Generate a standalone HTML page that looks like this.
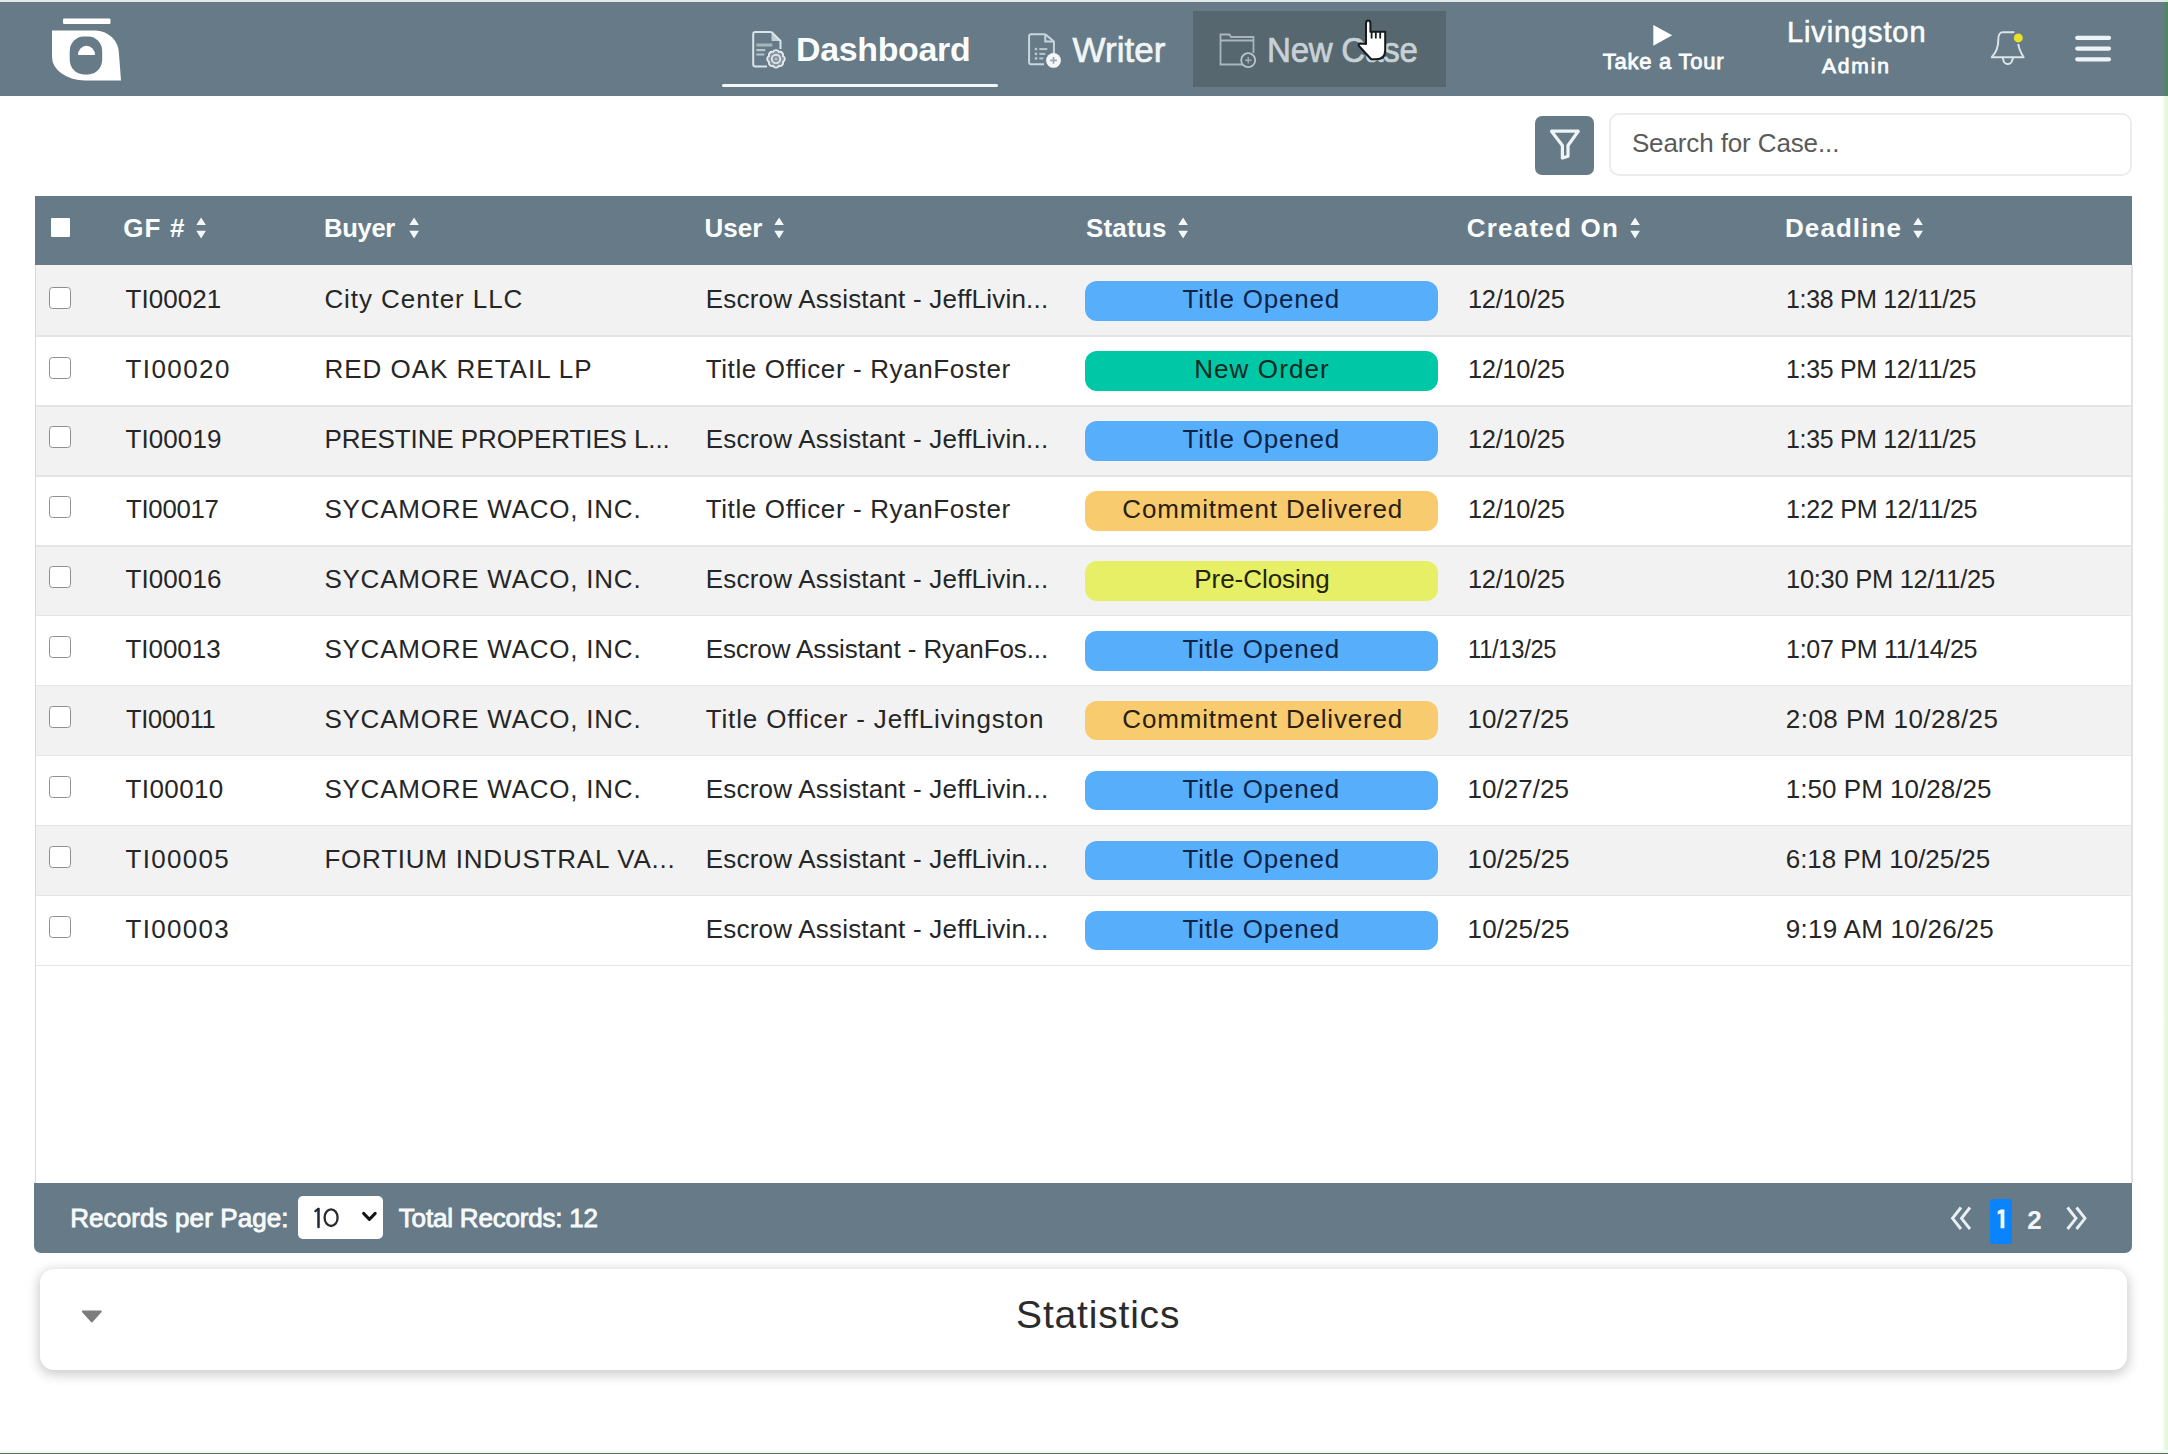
<!DOCTYPE html>
<html><head><meta charset="utf-8"><title>Dashboard</title>
<style>
html,body{margin:0;padding:0;width:2168px;height:1454px;overflow:hidden;background:#fff;}
body{position:relative;font-family:"Liberation Sans",sans-serif;}
.abs{position:absolute;}
.t{position:absolute;line-height:1;white-space:nowrap;}
</style></head><body>
<div class="abs" style="left:0;top:0;width:2168px;height:96px;background:#667b87"></div>
<div class="abs" style="left:0;top:0;width:2168px;height:1.6px;background:#e2e9eb"></div>
<svg class="abs" style="left:0;top:0" width="140" height="96" viewBox="0 0 140 96">
<rect x="63" y="18.5" width="47.5" height="5.5" rx="1.2" fill="#fff"/>
<path d="M52,30.4 H95 A24,23.5 0 0 1 119,54 L121,80.5 H85 A33,23.5 0 0 1 52,57 Z" fill="#fff"/>
<rect x="69.7" y="36.4" width="32.5" height="38" rx="14" ry="15" fill="#667b87"/>
<path d="M78,55 A8.5,9.3 0 0 1 95,55 Z" fill="#fff"/>
</svg>
<div class="abs" style="left:722px;top:83.5px;width:276px;height:3.5px;background:#f4f7f8;border-radius:2px"></div>
<div class="abs" style="left:1192.5px;top:11px;width:253px;height:75.5px;background:#56676f"></div>
<svg class="abs" style="left:740px;top:20px" width="60" height="60" viewBox="740 20 60 60">
<path d="M771.5,32 H755.5 Q753.2,32 753.2,34.3 V64.3 Q753.2,66.6 755.5,66.6 H767" fill="none" stroke="#d9e4ea" stroke-width="2"/>
<path d="M771.5,32 L780.5,41 V49" fill="none" stroke="#d9e4ea" stroke-width="2"/>
<path d="M771.5,32 V41 H780.5 Z" fill="#d9e4ea" opacity="0.8"/>
<rect x="756.3" y="43.5" width="16" height="3" fill="#a7b5bd"/>
<rect x="756.3" y="49" width="9" height="2.2" fill="#b7c3ca"/>
<rect x="756.3" y="53.5" width="8" height="2" fill="#b7c3ca"/>
<path d="M783.02,61.81 A3.3,3.3 0 0 1 778.91,65.92 A3.3,3.3 0 0 1 773.09,65.92 A3.3,3.3 0 0 1 768.98,61.81 A3.3,3.3 0 0 1 768.98,55.99 A3.3,3.3 0 0 1 773.09,51.88 A3.3,3.3 0 0 1 778.91,51.88 A3.3,3.3 0 0 1 783.02,55.99 A3.3,3.3 0 0 1 783.02,61.81 Z" fill="#8796a0" stroke="#e3ebef" stroke-width="1.9"/>
<circle cx="776" cy="58.9" r="4.2" fill="none" stroke="#dce5ea" stroke-width="1.9"/>
<circle cx="776" cy="58.9" r="1" fill="#c9d3d9"/>
</svg>
<svg class="abs" style="left:1020px;top:25px" width="50" height="50" viewBox="1020 25 50 50">
<path d="M1045.3,34.3 H1031 Q1029.1,34.3 1029.1,36.2 V62.3 Q1029.1,64.2 1031,64.2 H1044" fill="none" stroke="#c9d5dc" stroke-width="2"/>
<path d="M1045.3,34.3 L1053.9,41.5 V53" fill="none" stroke="#c9d5dc" stroke-width="2"/>
<path d="M1045.3,34.3 V41.5 H1053.9" fill="none" stroke="#c9d5dc" stroke-width="2"/>
<circle cx="1036" cy="49.1" r="1.4" fill="#b9c6cd"/><rect x="1039.3" y="48.1" width="8" height="2" fill="#b9c6cd"/>
<circle cx="1036" cy="53.9" r="1.4" fill="#b9c6cd"/><rect x="1039.3" y="52.9" width="6" height="2" fill="#b9c6cd"/>
<circle cx="1036" cy="58.4" r="1.4" fill="#b9c6cd"/><rect x="1039.3" y="57.4" width="4" height="2" fill="#b9c6cd"/>
<circle cx="1053.5" cy="60.4" r="7.4" fill="#f4f8fa"/>
<path d="M1053.5,57 V63.8 M1050.1,60.4 H1056.9" stroke="#9aa6ad" stroke-width="1.6"/>
</svg>
<svg class="abs" style="left:1210px;top:25px" width="55" height="50" viewBox="1210 25 55 50">
<path d="M1248,64.5 H1220.5 V34.5 H1229.5 L1231,37 H1253.5 V53" fill="none" stroke="#a9b6bd" stroke-width="1.8"/>
<path d="M1220.5,40.5 H1253.5" stroke="#a9b6bd" stroke-width="1.8"/>
<circle cx="1248.2" cy="60.2" r="7" fill="#56676f" stroke="#b8c4ca" stroke-width="1.8"/>
<path d="M1248.2,57 V63.4 M1245,60.2 H1251.4" stroke="#a3b0b7" stroke-width="1.4"/>
</svg>
<span class="t" style="left:796.4px;top:32.4px;font-size:34px;font-weight:bold;color:#fbfdfd;letter-spacing:-0.30px;transform:scaleX(0.9972);transform-origin:0 0;">Dashboard</span>
<span class="t" style="left:1072.5px;top:32.4px;font-size:35px;font-weight:normal;color:#f1f5f6;letter-spacing:0.06px;-webkit-text-stroke:0.7px #f1f5f6;">Writer</span>
<span class="t" style="left:1267.1px;top:32.4px;font-size:35px;font-weight:normal;color:#c8d1d5;letter-spacing:-0.30px;-webkit-text-stroke:0.7px #c8d1d5;transform:scaleX(0.9467);transform-origin:0 0;">New Case</span>
<svg class="abs" style="left:1350px;top:15px" width="45" height="50" viewBox="1350 15 45 50">
<path d="M1366,44 V23.5 Q1366,20.5 1368.2,20.5 Q1370.4,20.5 1370.4,23.5 V31.8 H1385.2 V50 Q1385.2,59.3 1376,59.3 H1371.2 L1359,46 Q1357.8,43.6 1360.5,43.6 Z" fill="#fff" stroke="#141a1e" stroke-width="2" stroke-linejoin="round"/>
<path d="M1371.6,32 V38.5 M1375.8,32 V38.5 M1380.2,32 V38.5" stroke="#141a1e" stroke-width="1.8"/>
</svg>
<svg class="abs" style="left:1645px;top:20px" width="35" height="30" viewBox="1645 20 35 30"><path d="M1653.3,25 L1672.2,35.3 L1653.3,45.7 Z" fill="#fff"/></svg>
<span class="t" style="left:1602.8px;top:50.8px;font-size:22px;font-weight:normal;color:#fbfdfd;letter-spacing:0.74px;-webkit-text-stroke:0.8px #fbfdfd;">Take a Tour</span>
<span class="t" style="left:1787.0px;top:17.9px;font-size:29px;font-weight:normal;color:#fbfdfd;letter-spacing:0.88px;-webkit-text-stroke:0.6px #fbfdfd;">Livingston</span>
<span class="t" style="left:1822.0px;top:55.3px;font-size:21px;font-weight:normal;color:#fbfdfd;letter-spacing:1.83px;-webkit-text-stroke:0.8px #fbfdfd;">Admin</span>
<svg class="abs" style="left:1980px;top:20px" width="55" height="55" viewBox="1980 20 55 55">
<path d="M2014.3,32.3 H2003 C1999,32.3 1998.3,35 1998.3,40 C1998.3,48 1996,52 1991.8,57.2 H2023.6 C2021,53 2018.8,48 2018.3,44" fill="none" stroke="#dbe4e9" stroke-width="2" stroke-linejoin="round"/>
<path d="M2002.6,57.2 L2003.8,61.5 Q2004.8,64 2007.8,64 Q2010.8,64 2011.8,61.5 L2013.2,57.2" fill="none" stroke="#dbe4e9" stroke-width="2"/>
<circle cx="2018.3" cy="37.9" r="4.5" fill="#ecdf2a"/>
</svg>
<svg class="abs" style="left:2070px;top:30px" width="48" height="36" viewBox="2070 30 48 36">
<path d="M2077.2,37.9 H2109 M2077.2,48.6 H2109 M2077.2,59.3 H2109" stroke="#eef3f6" stroke-width="4.2" stroke-linecap="round"/>
</svg>
<div class="abs" style="left:2162px;top:96px;width:6px;height:1358px;background:linear-gradient(90deg,rgba(230,252,224,0),#e3fbdc 60%,#def9d6)"></div>
<div class="abs" style="left:2163px;top:0;width:5px;height:96px;background:linear-gradient(90deg,rgba(70,136,88,0),#4a8a5c 75%,#46885a)"></div><div class="abs" style="left:2163px;top:0;width:5px;height:1.6px;background:linear-gradient(90deg,#e2e9eb,#c6f3c4)"></div>
<div class="abs" style="left:1535.3px;top:116.3px;width:58.8px;height:58.4px;background:#667b87;border-radius:7px"></div>
<svg class="abs" style="left:1540px;top:120px" width="50" height="50" viewBox="1540 120 50 50">
<path d="M1551.5,131.2 H1578.2 L1568,145.5 V156.2 L1562.4,158 V145.5 Z" fill="none" stroke="#eef4f7" stroke-width="3.2" stroke-linejoin="round"/>
</svg>
<div class="abs" style="left:1608.6px;top:112.7px;width:523px;height:63.7px;box-sizing:border-box;border:2px solid #ececec;border-radius:10px;background:#fff"></div>
<span class="t" style="left:1631.9px;top:129.5px;font-size:26px;font-weight:normal;color:#5a5a5a;letter-spacing:-0.12px;">Search for Case...</span>
<div class="abs" style="left:35px;top:195.5px;width:2096.5px;height:70px;background:#667b87"></div>
<div class="abs" style="left:35px;top:265px;width:2096.5px;height:918px;background:#fff"></div>
<div class="abs" style="left:50.5px;top:218px;width:19px;height:19px;background:#fff;border-radius:1px"></div>
<span class="t" style="left:123.2px;top:214.5px;font-size:26px;font-weight:bold;color:#fbfdfd;letter-spacing:1.17px;">GF #</span>
<svg class="abs" style="left:195px;top:216px" width="13" height="25" viewBox="0 0 13 25"><path d="M6.1,1.4 L10.9,9.1 H1.3 Z M6.1,22.4 L10.9,14.7 H1.3 Z" fill="#f4f7f8"/></svg>
<span class="t" style="left:324.0px;top:214.5px;font-size:26px;font-weight:bold;color:#fbfdfd;letter-spacing:-0.30px;transform:scaleX(0.9835);transform-origin:0 0;">Buyer</span>
<svg class="abs" style="left:408px;top:216px" width="13" height="25" viewBox="0 0 13 25"><path d="M6.1,1.4 L10.9,9.1 H1.3 Z M6.1,22.4 L10.9,14.7 H1.3 Z" fill="#f4f7f8"/></svg>
<span class="t" style="left:704.5px;top:214.5px;font-size:26px;font-weight:bold;color:#fbfdfd;letter-spacing:0.00px;">User</span>
<svg class="abs" style="left:773px;top:216px" width="13" height="25" viewBox="0 0 13 25"><path d="M6.1,1.4 L10.9,9.1 H1.3 Z M6.1,22.4 L10.9,14.7 H1.3 Z" fill="#f4f7f8"/></svg>
<span class="t" style="left:1086.0px;top:214.5px;font-size:26px;font-weight:bold;color:#fbfdfd;letter-spacing:0.18px;">Status</span>
<svg class="abs" style="left:1177px;top:216px" width="13" height="25" viewBox="0 0 13 25"><path d="M6.1,1.4 L10.9,9.1 H1.3 Z M6.1,22.4 L10.9,14.7 H1.3 Z" fill="#f4f7f8"/></svg>
<span class="t" style="left:1466.7px;top:214.5px;font-size:26px;font-weight:bold;color:#fbfdfd;letter-spacing:1.23px;">Created On</span>
<svg class="abs" style="left:1629.3px;top:216px" width="13" height="25" viewBox="0 0 13 25"><path d="M6.1,1.4 L10.9,9.1 H1.3 Z M6.1,22.4 L10.9,14.7 H1.3 Z" fill="#f4f7f8"/></svg>
<span class="t" style="left:1785.0px;top:214.5px;font-size:26px;font-weight:bold;color:#fbfdfd;letter-spacing:1.07px;">Deadline</span>
<svg class="abs" style="left:1911.8px;top:216px" width="13" height="25" viewBox="0 0 13 25"><path d="M6.1,1.4 L10.9,9.1 H1.3 Z M6.1,22.4 L10.9,14.7 H1.3 Z" fill="#f4f7f8"/></svg>
<div class="abs" style="left:36px;top:265.2px;width:2096.0px;height:70.1px;background:#f2f2f2"></div>
<div class="abs" style="left:36px;top:335.1px;width:2096.0px;height:70.1px;background:#ffffff"></div>
<div class="abs" style="left:36px;top:405.0px;width:2096.0px;height:70.1px;background:#f2f2f2"></div>
<div class="abs" style="left:36px;top:475.0px;width:2096.0px;height:70.1px;background:#ffffff"></div>
<div class="abs" style="left:36px;top:544.9px;width:2096.0px;height:70.1px;background:#f2f2f2"></div>
<div class="abs" style="left:36px;top:614.8px;width:2096.0px;height:70.1px;background:#ffffff"></div>
<div class="abs" style="left:36px;top:684.7px;width:2096.0px;height:70.1px;background:#f2f2f2"></div>
<div class="abs" style="left:36px;top:754.6px;width:2096.0px;height:70.1px;background:#ffffff"></div>
<div class="abs" style="left:36px;top:824.6px;width:2096.0px;height:70.1px;background:#f2f2f2"></div>
<div class="abs" style="left:36px;top:894.5px;width:2096.0px;height:70.1px;background:#ffffff"></div>
<div class="abs" style="left:36px;top:335.2px;width:2096.0px;height:1.6px;background:#e5e5e5"></div>
<div class="abs" style="left:36px;top:405.1px;width:2096.0px;height:1.6px;background:#e5e5e5"></div>
<div class="abs" style="left:36px;top:475.0px;width:2096.0px;height:1.6px;background:#e5e5e5"></div>
<div class="abs" style="left:36px;top:545.0px;width:2096.0px;height:1.6px;background:#e5e5e5"></div>
<div class="abs" style="left:36px;top:614.9px;width:2096.0px;height:1.6px;background:#e5e5e5"></div>
<div class="abs" style="left:36px;top:684.8px;width:2096.0px;height:1.6px;background:#e5e5e5"></div>
<div class="abs" style="left:36px;top:754.7px;width:2096.0px;height:1.6px;background:#e5e5e5"></div>
<div class="abs" style="left:36px;top:824.6px;width:2096.0px;height:1.6px;background:#e5e5e5"></div>
<div class="abs" style="left:36px;top:894.6px;width:2096.0px;height:1.6px;background:#e5e5e5"></div>
<div class="abs" style="left:36px;top:964.5px;width:2096.0px;height:1.6px;background:#e5e5e5"></div>
<div class="abs" style="left:34.5px;top:265px;width:1.6px;height:918px;background:#d9d9d9"></div>
<div class="abs" style="left:2131.2px;top:265px;width:1.6px;height:918px;background:#e2e2e2"></div>
<div class="abs" style="left:49.3px;top:286.6px;width:22px;height:22px;box-sizing:border-box;border:1.8px solid #8f8f8f;border-radius:3.5px;background:#fff"></div>
<span class="t" style="left:125.5px;top:286.4px;font-size:26px;font-weight:normal;color:#262626;letter-spacing:0.03px;">TI00021</span>
<span class="t" style="left:324.4px;top:286.4px;font-size:26px;font-weight:normal;color:#262626;letter-spacing:0.93px;">City Center LLC</span>
<span class="t" style="left:705.7px;top:286.4px;font-size:26px;font-weight:normal;color:#262626;letter-spacing:0.21px;">Escrow Assistant - JeffLivin...</span>
<div class="abs" style="left:1085px;top:281.4px;width:353px;height:39.5px;background:#57aefa;border-radius:12px"></div>
<span class="t" style="left:1182.5px;top:286.4px;font-size:26px;font-weight:normal;color:#0e2447;letter-spacing:0.81px;">Title Opened</span>
<span class="t" style="left:1467.6px;top:286.4px;font-size:26px;font-weight:normal;color:#262626;letter-spacing:-0.30px;transform:scaleX(0.9767);transform-origin:0 0;">12/10/25</span>
<span class="t" style="left:1785.8px;top:286.4px;font-size:26px;font-weight:normal;color:#262626;letter-spacing:-0.30px;transform:scaleX(0.9567);transform-origin:0 0;">1:38 PM 12/11/25</span>
<div class="abs" style="left:49.3px;top:356.5px;width:22px;height:22px;box-sizing:border-box;border:1.8px solid #8f8f8f;border-radius:3.5px;background:#fff"></div>
<span class="t" style="left:125.5px;top:356.3px;font-size:26px;font-weight:normal;color:#262626;letter-spacing:1.42px;">TI00020</span>
<span class="t" style="left:324.4px;top:356.3px;font-size:26px;font-weight:normal;color:#262626;letter-spacing:0.99px;">RED OAK RETAIL LP</span>
<span class="t" style="left:705.7px;top:356.3px;font-size:26px;font-weight:normal;color:#262626;letter-spacing:0.62px;">Title Officer - RyanFoster</span>
<div class="abs" style="left:1085px;top:351.3px;width:353px;height:39.5px;background:#00c8a6;border-radius:12px"></div>
<span class="t" style="left:1194.2px;top:356.3px;font-size:26px;font-weight:normal;color:#0c2a22;letter-spacing:1.10px;">New Order</span>
<span class="t" style="left:1467.6px;top:356.3px;font-size:26px;font-weight:normal;color:#262626;letter-spacing:-0.30px;transform:scaleX(0.9767);transform-origin:0 0;">12/10/25</span>
<span class="t" style="left:1785.8px;top:356.3px;font-size:26px;font-weight:normal;color:#262626;letter-spacing:-0.30px;transform:scaleX(0.9567);transform-origin:0 0;">1:35 PM 12/11/25</span>
<div class="abs" style="left:49.3px;top:426.4px;width:22px;height:22px;box-sizing:border-box;border:1.8px solid #8f8f8f;border-radius:3.5px;background:#fff"></div>
<span class="t" style="left:125.5px;top:426.2px;font-size:26px;font-weight:normal;color:#262626;letter-spacing:0.08px;">TI00019</span>
<span class="t" style="left:324.4px;top:426.2px;font-size:26px;font-weight:normal;color:#262626;letter-spacing:-0.10px;">PRESTINE PROPERTIES L...</span>
<span class="t" style="left:705.7px;top:426.2px;font-size:26px;font-weight:normal;color:#262626;letter-spacing:0.21px;">Escrow Assistant - JeffLivin...</span>
<div class="abs" style="left:1085px;top:421.2px;width:353px;height:39.5px;background:#57aefa;border-radius:12px"></div>
<span class="t" style="left:1182.5px;top:426.2px;font-size:26px;font-weight:normal;color:#0e2447;letter-spacing:0.81px;">Title Opened</span>
<span class="t" style="left:1467.6px;top:426.2px;font-size:26px;font-weight:normal;color:#262626;letter-spacing:-0.30px;transform:scaleX(0.9767);transform-origin:0 0;">12/10/25</span>
<span class="t" style="left:1785.8px;top:426.2px;font-size:26px;font-weight:normal;color:#262626;letter-spacing:-0.30px;transform:scaleX(0.9567);transform-origin:0 0;">1:35 PM 12/11/25</span>
<div class="abs" style="left:49.3px;top:496.4px;width:22px;height:22px;box-sizing:border-box;border:1.8px solid #8f8f8f;border-radius:3.5px;background:#fff"></div>
<span class="t" style="left:125.5px;top:496.2px;font-size:26px;font-weight:normal;color:#262626;letter-spacing:-0.30px;transform:scaleX(0.9925);transform-origin:0 0;">TI00017</span>
<span class="t" style="left:324.4px;top:496.2px;font-size:26px;font-weight:normal;color:#262626;letter-spacing:0.77px;">SYCAMORE WACO, INC.</span>
<span class="t" style="left:705.7px;top:496.2px;font-size:26px;font-weight:normal;color:#262626;letter-spacing:0.62px;">Title Officer - RyanFoster</span>
<div class="abs" style="left:1085px;top:491.2px;width:353px;height:39.5px;background:#f8cc6e;border-radius:12px"></div>
<span class="t" style="left:1122.3px;top:496.2px;font-size:26px;font-weight:normal;color:#2a2010;letter-spacing:0.82px;">Commitment Delivered</span>
<span class="t" style="left:1467.6px;top:496.2px;font-size:26px;font-weight:normal;color:#262626;letter-spacing:-0.30px;transform:scaleX(0.9767);transform-origin:0 0;">12/10/25</span>
<span class="t" style="left:1785.8px;top:496.2px;font-size:26px;font-weight:normal;color:#262626;letter-spacing:-0.30px;transform:scaleX(0.9632);transform-origin:0 0;">1:22 PM 12/11/25</span>
<div class="abs" style="left:49.3px;top:566.3px;width:22px;height:22px;box-sizing:border-box;border:1.8px solid #8f8f8f;border-radius:3.5px;background:#fff"></div>
<span class="t" style="left:125.5px;top:566.1px;font-size:26px;font-weight:normal;color:#262626;letter-spacing:0.08px;">TI00016</span>
<span class="t" style="left:324.4px;top:566.1px;font-size:26px;font-weight:normal;color:#262626;letter-spacing:0.77px;">SYCAMORE WACO, INC.</span>
<span class="t" style="left:705.7px;top:566.1px;font-size:26px;font-weight:normal;color:#262626;letter-spacing:0.21px;">Escrow Assistant - JeffLivin...</span>
<div class="abs" style="left:1085px;top:561.1px;width:353px;height:39.5px;background:#e6ef66;border-radius:12px"></div>
<span class="t" style="left:1194.2px;top:566.1px;font-size:26px;font-weight:normal;color:#23240c;letter-spacing:-0.03px;">Pre-Closing</span>
<span class="t" style="left:1467.6px;top:566.1px;font-size:26px;font-weight:normal;color:#262626;letter-spacing:-0.30px;transform:scaleX(0.9767);transform-origin:0 0;">12/10/25</span>
<span class="t" style="left:1785.8px;top:566.1px;font-size:26px;font-weight:normal;color:#262626;letter-spacing:-0.30px;transform:scaleX(0.9817);transform-origin:0 0;">10:30 PM 12/11/25</span>
<div class="abs" style="left:49.3px;top:636.2px;width:22px;height:22px;box-sizing:border-box;border:1.8px solid #8f8f8f;border-radius:3.5px;background:#fff"></div>
<span class="t" style="left:125.5px;top:636.0px;font-size:26px;font-weight:normal;color:#262626;letter-spacing:-0.05px;">TI00013</span>
<span class="t" style="left:324.4px;top:636.0px;font-size:26px;font-weight:normal;color:#262626;letter-spacing:0.77px;">SYCAMORE WACO, INC.</span>
<span class="t" style="left:705.7px;top:636.0px;font-size:26px;font-weight:normal;color:#262626;letter-spacing:-0.10px;">Escrow Assistant - RyanFos...</span>
<div class="abs" style="left:1085px;top:631.0px;width:353px;height:39.5px;background:#57aefa;border-radius:12px"></div>
<span class="t" style="left:1182.5px;top:636.0px;font-size:26px;font-weight:normal;color:#0e2447;letter-spacing:0.81px;">Title Opened</span>
<span class="t" style="left:1467.6px;top:636.0px;font-size:26px;font-weight:normal;color:#262626;letter-spacing:-0.30px;transform:scaleX(0.9112);transform-origin:0 0;">11/13/25</span>
<span class="t" style="left:1785.8px;top:636.0px;font-size:26px;font-weight:normal;color:#262626;letter-spacing:-0.30px;transform:scaleX(0.9632);transform-origin:0 0;">1:07 PM 11/14/25</span>
<div class="abs" style="left:49.3px;top:706.1px;width:22px;height:22px;box-sizing:border-box;border:1.8px solid #8f8f8f;border-radius:3.5px;background:#fff"></div>
<span class="t" style="left:125.5px;top:705.9px;font-size:26px;font-weight:normal;color:#262626;letter-spacing:-0.30px;transform:scaleX(0.9792);transform-origin:0 0;">TI00011</span>
<span class="t" style="left:324.4px;top:705.9px;font-size:26px;font-weight:normal;color:#262626;letter-spacing:0.77px;">SYCAMORE WACO, INC.</span>
<span class="t" style="left:705.7px;top:705.9px;font-size:26px;font-weight:normal;color:#262626;letter-spacing:0.85px;">Title Officer - JeffLivingston</span>
<div class="abs" style="left:1085px;top:700.9px;width:353px;height:39.5px;background:#f8cc6e;border-radius:12px"></div>
<span class="t" style="left:1122.3px;top:705.9px;font-size:26px;font-weight:normal;color:#2a2010;letter-spacing:0.82px;">Commitment Delivered</span>
<span class="t" style="left:1467.6px;top:705.9px;font-size:26px;font-weight:normal;color:#262626;letter-spacing:0.03px;">10/27/25</span>
<span class="t" style="left:1785.8px;top:705.9px;font-size:26px;font-weight:normal;color:#262626;letter-spacing:0.46px;">2:08 PM 10/28/25</span>
<div class="abs" style="left:49.3px;top:776.0px;width:22px;height:22px;box-sizing:border-box;border:1.8px solid #8f8f8f;border-radius:3.5px;background:#fff"></div>
<span class="t" style="left:125.5px;top:775.8px;font-size:26px;font-weight:normal;color:#262626;letter-spacing:0.40px;">TI00010</span>
<span class="t" style="left:324.4px;top:775.8px;font-size:26px;font-weight:normal;color:#262626;letter-spacing:0.77px;">SYCAMORE WACO, INC.</span>
<span class="t" style="left:705.7px;top:775.8px;font-size:26px;font-weight:normal;color:#262626;letter-spacing:0.21px;">Escrow Assistant - JeffLivin...</span>
<div class="abs" style="left:1085px;top:770.8px;width:353px;height:39.5px;background:#57aefa;border-radius:12px"></div>
<span class="t" style="left:1182.5px;top:775.8px;font-size:26px;font-weight:normal;color:#0e2447;letter-spacing:0.81px;">Title Opened</span>
<span class="t" style="left:1467.6px;top:775.8px;font-size:26px;font-weight:normal;color:#262626;letter-spacing:0.03px;">10/27/25</span>
<span class="t" style="left:1785.8px;top:775.8px;font-size:26px;font-weight:normal;color:#262626;letter-spacing:0.03px;">1:50 PM 10/28/25</span>
<div class="abs" style="left:49.3px;top:846.0px;width:22px;height:22px;box-sizing:border-box;border:1.8px solid #8f8f8f;border-radius:3.5px;background:#fff"></div>
<span class="t" style="left:125.5px;top:845.8px;font-size:26px;font-weight:normal;color:#262626;letter-spacing:1.32px;">TI00005</span>
<span class="t" style="left:324.4px;top:845.8px;font-size:26px;font-weight:normal;color:#262626;letter-spacing:0.78px;">FORTIUM INDUSTRAL VA...</span>
<span class="t" style="left:705.7px;top:845.8px;font-size:26px;font-weight:normal;color:#262626;letter-spacing:0.21px;">Escrow Assistant - JeffLivin...</span>
<div class="abs" style="left:1085px;top:840.8px;width:353px;height:39.5px;background:#57aefa;border-radius:12px"></div>
<span class="t" style="left:1182.5px;top:845.8px;font-size:26px;font-weight:normal;color:#0e2447;letter-spacing:0.81px;">Title Opened</span>
<span class="t" style="left:1467.6px;top:845.8px;font-size:26px;font-weight:normal;color:#262626;letter-spacing:0.10px;">10/25/25</span>
<span class="t" style="left:1785.8px;top:845.8px;font-size:26px;font-weight:normal;color:#262626;letter-spacing:-0.06px;">6:18 PM 10/25/25</span>
<div class="abs" style="left:49.3px;top:915.9px;width:22px;height:22px;box-sizing:border-box;border:1.8px solid #8f8f8f;border-radius:3.5px;background:#fff"></div>
<span class="t" style="left:125.5px;top:915.7px;font-size:26px;font-weight:normal;color:#262626;letter-spacing:1.32px;">TI00003</span>
<span class="t" style="left:705.7px;top:915.7px;font-size:26px;font-weight:normal;color:#262626;letter-spacing:0.21px;">Escrow Assistant - JeffLivin...</span>
<div class="abs" style="left:1085px;top:910.7px;width:353px;height:39.5px;background:#57aefa;border-radius:12px"></div>
<span class="t" style="left:1182.5px;top:915.7px;font-size:26px;font-weight:normal;color:#0e2447;letter-spacing:0.81px;">Title Opened</span>
<span class="t" style="left:1467.6px;top:915.7px;font-size:26px;font-weight:normal;color:#262626;letter-spacing:0.10px;">10/25/25</span>
<span class="t" style="left:1785.8px;top:915.7px;font-size:26px;font-weight:normal;color:#262626;letter-spacing:0.27px;">9:19 AM 10/26/25</span>
<div class="abs" style="left:34px;top:1182.7px;width:2097.5px;height:70px;background:#667b87;border-radius:0 0 7px 7px"></div>
<span class="t" style="left:70.2px;top:1204.8px;font-size:26px;font-weight:normal;color:#f6f9fa;letter-spacing:0.10px;-webkit-text-stroke:0.9px #f6f9fa;">Records per Page:</span>
<div class="abs" style="left:297.6px;top:1195.8px;width:85.7px;height:42.8px;background:#fff;border-radius:5px"></div>
<svg class="abs" style="left:310px;top:1204px" width="35" height="28" viewBox="310 1204 35 28"><path d="M318.5,1209 V1227" stroke="#1d2a33" stroke-width="2.5" stroke-linecap="round"/><path d="M315.4,1211.2 L318.3,1208.8" stroke="#1d2a33" stroke-width="2.2" stroke-linecap="round"/><ellipse cx="331.1" cy="1217.7" rx="6.5" ry="8.3" fill="none" stroke="#2a2a30" stroke-width="2.3"/></svg>
<svg class="abs" style="left:358px;top:1207px" width="22" height="20" viewBox="358 1207 22 20"><path d="M363.6,1213.4 L369.4,1219.4 L375.2,1213.4" fill="none" stroke="#151515" stroke-width="3" stroke-linecap="round" stroke-linejoin="round"/></svg>
<span class="t" style="left:398.8px;top:1204.8px;font-size:26px;font-weight:normal;color:#f6f9fa;letter-spacing:-0.19px;-webkit-text-stroke:0.9px #f6f9fa;">Total Records: 12</span>
<svg class="abs" style="left:1945px;top:1200px" width="150" height="40" viewBox="1945 1200 150 40"><path d="M1961,1207.5 L1952.5,1218.3 L1961,1229 M1970,1207.5 L1961.5,1218.3 L1970,1229 M2067.5,1207.5 L2076,1218.3 L2067.5,1229 M2076.5,1207.5 L2085,1218.3 L2076.5,1229" fill="none" stroke="#e9eff2" stroke-width="2.9"/></svg>
<div class="abs" style="left:1990.2px;top:1199.1px;width:22px;height:44.9px;background:#0a84fc;border-radius:3px"></div>
<svg class="abs" style="left:1990px;top:1200px" width="25" height="40" viewBox="1990 1200 25 40"><path d="M2000.6,1209.5 H2004.4 V1228.2 H2000.6 V1213.6 L1997.7,1214.4 V1211.2 Z" fill="#f2f8ff"/></svg>
<span class="t" style="left:2027.2px;top:1206.5px;font-size:26px;font-weight:bold;color:#f4f7f8;letter-spacing:0.00px;">2</span>
<div class="abs" style="left:40px;top:1268.7px;width:2087px;height:101px;background:#fff;border-radius:14px;box-shadow:0 3px 12px 2px rgba(0,0,0,0.2)"></div>
<svg class="abs" style="left:75px;top:1300px" width="35" height="30" viewBox="75 1300 35 30"><path d="M82.6,1311.4 H101 L91.8,1321.6 Z" fill="#7d7d7d" stroke="#7d7d7d" stroke-width="1.6" stroke-linejoin="round"/></svg>
<span class="t" style="left:1016.1px;top:1295.4px;font-size:39px;font-weight:normal;color:#2b2b2b;letter-spacing:0.81px;">Statistics</span>
<div class="abs" style="left:0;top:1450px;width:2168px;height:3px;background:linear-gradient(180deg,#fafdf9,#eef8ec)"></div><div class="abs" style="left:0;top:1453px;width:2168px;height:1px;background:#5d6e5e"></div>
</body></html>
